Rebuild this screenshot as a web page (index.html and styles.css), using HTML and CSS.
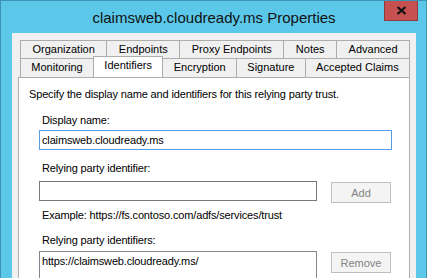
FILE: index.html
```html
<!DOCTYPE html>
<html lang="en">
<head>
  <meta charset="UTF-8" />
  <title>claimsweb.cloudready.ms Properties</title>
  <link rel="stylesheet" href="styles.css">
</head>
<body>

  <div class="window">
    <div class="titlebar">
      <span class="title">claimsweb.cloudready.ms Properties</span>
      <button class="close" title="Close">
        <svg width="11" height="9" viewBox="0 0 11 9"><path d="M1.5 1 L9.5 8 M9.5 1 L1.5 8" stroke="#111" stroke-width="2.2" fill="none"/></svg>
      </button>
    </div>

    <div class="client">
      <div class="tab-row back">
        <div class="tab">Organization</div>
        <div class="tab">Endpoints</div>
        <div class="tab">Proxy Endpoints</div>
        <div class="tab">Notes</div>
        <div class="tab">Advanced</div>
      </div>
      <div class="tab-row front">
        <div class="tab">Monitoring</div>
        <div class="tab selected">Identifiers</div>
        <div class="tab">Encryption</div>
        <div class="tab">Signature</div>
        <div class="tab">Accepted Claims</div>
      </div>

      <div class="panel">
        <p class="intro">Specify the display name and identifiers for this relying party trust.</p>

        <div class="group">
          <label class="label">Display name:</label>
          <input class="textbox focused wide" type="text" value="claimsweb.cloudready.ms" />

          <label class="label gap">Relying party identifier:</label>
          <div class="row">
            <input class="textbox" type="text" value="" />
            <button class="btn" disabled>Add</button>
          </div>
          <div class="label hint">Example: https://fs.contoso.com/adfs/services/trust</div>

          <label class="label gap">Relying party identifiers:</label>
          <div class="row list-row">
            <div class="listbox">
              <div class="item">https://claimsweb.cloudready.ms/</div>
            </div>
            <button class="btn" disabled>Remove</button>
          </div>
        </div>
      </div>
    </div>
  </div>

</body>
</html>
```

FILE: styles.css
```css
* { margin: 0; padding: 0; box-sizing: border-box; }
html, body { width: 427px; height: 278px; overflow: hidden; }
body {
  font-family: 'Liberation Sans', Arial, sans-serif;
  font-size: 11px;
  color: #000;
  background: #5bc8ea;
}
.window {
  width: 427px;
  height: 278px;
  overflow: hidden;
  background: #5bc8ea;
  border: 1px solid #3d93b3;
  border-bottom: none;
  padding: 0 10px 0 11px;
  display: flex;
  flex-direction: column;
}
.titlebar {
  flex: 0 0 32px;
  display: flex;
  justify-content: center;
  align-items: center;
  position: relative;
}
.title {
  font-size: 15px;
  color: #111;
}
.close {
  position: absolute;
  top: -1px;
  right: -2px;
  width: 34px;
  height: 21px;
  background: #c75050;
  border: 1px solid #8f3b3b;
  border-top: none;
  display: flex;
  align-items: center;
  justify-content: center;
}
.client {
  flex: 1 0 auto;
  background: #f0f0f0;
  padding: 7px 6px 0 6px;
  display: flex;
  flex-direction: column;
}
.tab-row {
  display: flex;
  flex: 0 0 18px;
  margin-left: 2px;
}
.tab {
  flex: 1 1 auto;
  text-align: center;
  line-height: 17px;
  background: #f0f0f0;
  border: 1px solid #adadad;
  border-bottom: none;
  margin-left: -1px;
  white-space: nowrap;
}
.tab:first-child { margin-left: 0; }
.tab-row.front { position: relative; z-index: 1; }
.tab.selected {
  background: #fff;
  margin-top: -2px;
  height: 21px;
  line-height: 17px;
  position: relative;
  z-index: 2;
}
.panel {
  flex: 1 0 auto;
  background: #fff;
  border: 1px solid #adadad;
  padding: 9px 0 0 10px;
  letter-spacing: -0.15px;
}
.intro { line-height: 14px; }
.group { padding-left: 10px; }
.label {
  display: block;
  line-height: 14px;
  margin-top: 12px;
  margin-left: 3px;
}
.label.gap { margin-top: 11px; }
.label.hint { margin-top: 5px; }
.textbox {
  display: block;
  height: 20px;
  width: 278px;
  border: 1px solid #7a7a7a;
  background: #fff;
  font-family: inherit;
  font-size: 11px;
  letter-spacing: -0.15px;
  padding: 0 2px;
  outline: none;
}
.textbox.wide { width: 353px; margin-top: 3px; }
.textbox.focused { border-color: #569de5; }
.row {
  display: flex;
  align-items: flex-start;
  gap: 14px;
  margin-top: 6px;
}
.btn {
  width: 60px;
  height: 21px;
  margin-top: 1px;
  background: #f4f4f4;
  border: 1px solid #bfbfbf;
  color: #838383;
  font-family: inherit;
  font-size: 11px;
}
.list-row { margin-top: 4px; }
.listbox {
  width: 278px;
  height: 60px;
  border: 1px solid #828790;
  background: #fff;
  padding: 2px 2px;
}
.item { line-height: 14px; }
```
